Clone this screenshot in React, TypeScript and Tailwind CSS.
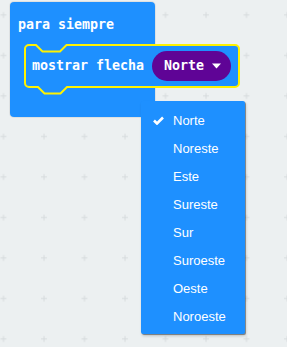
import { Fragment } from "react";

const options = ["Norte", "Noreste", "Este", "Sureste", "Sur", "Suroeste", "Oeste", "Noroeste"];

function GridDots() {
  return (
    <svg className="absolute inset-0 h-full w-full" aria-hidden>
      <defs>
        <pattern id="grid" x="0.5" y="-5.5" width="40.5" height="40.5" patternUnits="userSpaceOnUse">
          <path d="M0 20.5h6M3 17.5v6" stroke="#d6dbdd" strokeWidth="1" fill="none" />
        </pattern>
      </defs>
      <rect width="100%" height="100%" fill="url(#grid)" />
    </svg>
  );
}

function ShowArrowBlock() {
  return (
    <div className="relative flex h-[44px] w-[216px] items-center pl-[8px]">
      {/* block outline with notch and tab, drawn the way Blockly draws it */}
      <svg className="absolute inset-0 overflow-visible" width="216" height="44" aria-hidden>
        <path
          d="M1 5a4 4 0 0 1 4-4H12l6.5 6.5H36l6.5-6.5H211a4 4 0 0 1 4 4V39a4 4 0 0 1-4 4H43l-6.5 6.5H20.5L14 43H5a4 4 0 0 1-4-4Z"
          fill="#1e90ff"
          stroke="#fff200"
          strokeWidth="2"
        />
      </svg>
      <span className="relative font-['DejaVu_Sans_Mono',monospace] text-[13.3px] font-bold leading-4 text-white">
        mostrar flecha
      </span>
      <div className="relative ml-[8px] flex h-[30px] w-[79px] items-center rounded-full bg-[#5f0496] pl-[12px]">
        <span className="font-['DejaVu_Sans_Mono',monospace] text-[13.3px] font-bold leading-4 text-white">Norte</span>
        <svg className="ml-[8px]" width="9" height="6" viewBox="0 0 9 6" aria-hidden>
          <path d="M0 0.5h9L4.5 5.5Z" fill="#fff" />
        </svg>
      </div>
    </div>
  );
}

export default function App() {
  return (
    <div className="relative h-[347px] w-[287px] overflow-hidden bg-[#ecf0f1]">
      <GridDots />

      <div className="relative pl-[10px] pt-[2px]">
        <div className="w-[145px] rounded-[4px] bg-[#1e90ff] shadow-[0_0_0_1px_rgba(0,0,0,0.06)]">
          <div className="h-[42px] pl-[8px] pt-[15px] font-['DejaVu_Sans_Mono',monospace] text-[13.3px] font-bold leading-4 text-white">
            para siempre
          </div>
          <div className="pl-[14px]">
            <ShowArrowBlock />
          </div>
          <div className="h-[29px]" />
        </div>
      </div>

      <div className="absolute left-[141px] top-[101px] w-[104px] rounded-[2px] bg-[#1e90ff] pb-[4px] pt-[5px] shadow-[1px_1px_0_rgba(0,0,0,0.35),1px_2px_3px_rgba(0,0,0,0.2)]">
        {options.map((name, i) => (
          <Fragment key={name}>
            <div className="flex h-[28px] items-center">
              <div className="flex w-[32px] justify-end pr-[9px]">
                {i === 0 && (
                  <svg width="11" height="9" viewBox="0 0 11 9" aria-hidden>
                    <path d="M1 4.5l3 3L10 1.5" stroke="#fff" strokeWidth="2.6" fill="none" />
                  </svg>
                )}
              </div>
              <span className="pt-[1px] font-['Liberation_Sans',Arial,sans-serif] text-[13px] leading-4 text-white">{name}</span>
            </div>
          </Fragment>
        ))}
      </div>
    </div>
  );
}
